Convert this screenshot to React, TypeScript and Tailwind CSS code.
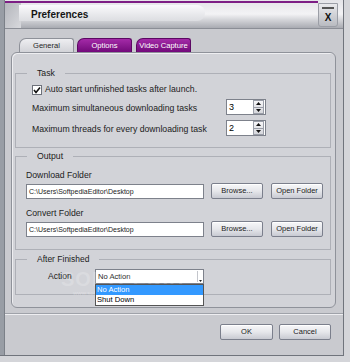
import React from "react";

const font = { fontFamily: '"Liberation Sans", Arial, sans-serif' };

function Spin({ value }: { value: string }) {
  return (
    <div className="w-[40px] h-[16px] bg-white border border-[#7d818b] flex items-center">
      <span className="flex-1 pl-[2px] text-[9px] leading-none text-black">{value}</span>
      <div className="w-[11px] h-[14px] mr-[1px] flex flex-col border border-[#9a9ea8] bg-gradient-to-b from-[#f6f6f8] to-[#d6d7dc]">
        <div className="flex-1 flex items-center justify-center">
          <svg width="5" height="3" viewBox="0 0 5 3"><path d="M0 3 L2.5 0 L5 3 Z" fill="#111" /></svg>
        </div>
        <div className="h-px bg-[#9a9ea8]" />
        <div className="flex-1 flex items-center justify-center">
          <svg width="5" height="3" viewBox="0 0 5 3"><path d="M0 0 L5 0 L2.5 3 Z" fill="#111" /></svg>
        </div>
      </div>
    </div>
  );
}

function Btn({ label, w }: { label: string; w: string }) {
  return (
    <div
      className={`${w} h-[16px] flex items-center justify-center rounded-[2px] border border-[#7b7f8c] bg-gradient-to-b from-[#f7f7f9] via-[#e6e7eb] to-[#c8cad2] text-[7.5px] text-[#1a1a1a] shadow-[inset_0_1px_0_#ffffff]`}
    >
      {label}
    </div>
  );
}

export default function App() {
  return (
    <div className="w-[350px] h-[362px] bg-[#d4d5d9] overflow-hidden" style={font}>
      <div className="w-[344px] h-[356px] flex bg-[#c9cacf] border-r border-b border-[#70747c]">
        <div className="w-[5px] bg-[#989da5] border-r border-[#7b8088]" />
        <div className="flex-1 flex flex-col relative">
          {/* Title bar */}
          <div className="h-[29px] relative flex items-center bg-gradient-to-b from-[#e4e4e8] via-[#f3f3f5] to-[#a9abb2] border-b border-[#8b8e96]">
            <div className="absolute left-0 right-[25px] top-[1px] h-[2px] bg-[#7d1e85]" />
            <div className="absolute left-0 top-[3px] w-[16px] h-[25px] bg-gradient-to-br from-[#b4b6bc] to-[#d8d9dd]" />
            <div className="absolute left-[14px] top-[5px] w-[186px] h-[16px] rounded-r-[8px] bg-gradient-to-b from-[#fafafc] to-[#dcdde1]" />
            <span className="relative ml-[26px] text-[10px] font-bold text-[#151515]">Preferences</span>
            <div className="absolute right-[5px] top-[3px] w-[20px] h-[24px] bg-gradient-to-b from-[#e9e9ec] to-[#b9bbc1] border border-[#9b9ea6] rounded-b-[3px] flex flex-col items-center">
              <div className="mt-[3px] w-[12px] h-[2px] bg-[#555]" />
              <span className="mt-[4px] text-[10px] font-bold leading-none text-[#111]">X</span>
            </div>
          </div>

          {/* Tabs */}
          <div className="mt-[9px] h-[14px] flex items-end pl-[14px]">
            <div className="w-[55px] h-[14px] rounded-tl-[7px] rounded-tr-[3px] border border-b-0 border-[#8e9199] bg-gradient-to-b from-[#eeeef1] to-[#d2d3d8] flex items-center justify-center text-[7.6px] font-medium text-[#1e1e1e]">
              General
            </div>
            <div className="ml-[3px] w-[55px] h-[14px] rounded-tl-[7px] rounded-tr-[3px] border border-b-0 border-[#5c0863] bg-gradient-to-b from-[#a42aa8] to-[#72087a] flex items-center justify-center text-[7.6px] font-medium text-white">
              Options
            </div>
            <div className="ml-[4px] w-[55px] h-[14px] rounded-tl-[7px] rounded-tr-[3px] border border-b-0 border-[#5c0863] bg-gradient-to-b from-[#a42aa8] to-[#72087a] flex items-center justify-center text-[7.6px] font-medium text-white whitespace-nowrap">
              Video Capture
            </div>
          </div>

          {/* Panel */}
          <div className="ml-[6px] w-[325px] h-[256px] rounded-[6px] border border-[#8f929a] bg-[#d2d3d8] shadow-[inset_1px_1px_0_#eeeef1] pt-[15px] pl-[3px] pr-[4px] flex flex-col text-[8.7px] text-[#1c1c1c]">
            {/* Task */}
            <fieldset className="h-[80px] border border-[#aeb0b7] px-0">
              <legend className="ml-[11px] px-[10px] h-[10px] leading-[10px] text-[8.7px]">Task</legend>
              <div className="pl-[16px] flex flex-col">
                <div className="mt-[6px] h-[12px] flex items-center">
                  <div className="w-[10px] h-[10px] bg-white border border-[#6d717a] flex items-center justify-center">
                    <svg width="8" height="8" viewBox="0 0 8 8"><path d="M1 4 L3 6.5 L7 1.5" stroke="#111" strokeWidth="1.6" fill="none" /></svg>
                  </div>
                  <span className="ml-[3px]">Auto start unfinished tasks after launch.</span>
                </div>
                <div className="mt-[3px] h-[16px] flex items-center">
                  <span className="w-[194px] pt-[3px]">Maximum simultaneous downloading tasks</span>
                  <Spin value="3" />
                </div>
                <div className="mt-[5px] h-[16px] flex items-center">
                  <span className="w-[194px] pt-[3px]">Maximum threads for every downloading task</span>
                  <Spin value="2" />
                </div>
              </div>
            </fieldset>

            {/* Output */}
            <fieldset className="mt-[3px] h-[99px] border border-[#aeb0b7]">
              <legend className="ml-[11px] px-[10px] h-[10px] leading-[10px] text-[8.7px]">Output</legend>
              <div className="pl-[10px] flex flex-col">
                <div className="mt-[9px] h-[10px] leading-[10px]">Download Folder</div>
                <div className="mt-[3px] h-[16px] flex items-center">
                  <div className="w-[178px] h-[15px] bg-white border border-[#7d818b] flex items-center pl-[2px] text-[7px] leading-none">
                    C:\Users\SoftpediaEditor\Desktop
                  </div>
                  <div className="ml-[7px]"><Btn label="Browse..." w="w-[52px]" /></div>
                  <div className="ml-[8px]"><Btn label="Open Folder" w="w-[52px]" /></div>
                </div>
                <div className="mt-[9px] h-[10px] leading-[10px]">Convert Folder</div>
                <div className="mt-[3px] h-[16px] flex items-center">
                  <div className="w-[178px] h-[15px] bg-white border border-[#7d818b] flex items-center pl-[2px] text-[7px] leading-none">
                    C:\Users\SoftpediaEditor\Desktop
                  </div>
                  <div className="ml-[7px]"><Btn label="Browse..." w="w-[52px]" /></div>
                  <div className="ml-[8px]"><Btn label="Open Folder" w="w-[52px]" /></div>
                </div>
              </div>
            </fieldset>

            {/* After Finished */}
            <fieldset className="mt-[4px] h-[41px] border border-[#aeb0b7]">
              <legend className="ml-[11px] px-[10px] h-[10px] leading-[10px] text-[8.5px]">After Finished</legend>
              <div className="pl-[32px] mt-[5px] h-[15px] flex items-center">
                <span className="w-[47px] text-[8.5px]">Action</span>
                <div className="relative w-[109px] h-[15px] bg-white border border-[#7d818b] flex items-center">
                  <span className="flex-1 pl-[2px] text-[7.6px] leading-none">No Action</span>
                  <div className="w-[5px] h-[11px] mr-[1px] flex items-end justify-center border-l border-[#c4c6cc]">
                    <svg width="3" height="2" viewBox="0 0 3 2"><path d="M0 0 L3 0 L1.5 2 Z" fill="#222" /></svg>
                  </div>
                  <div className="absolute left-[-1px] top-[14px] w-[109px] h-[22px] bg-white border border-[#555] flex flex-col text-[7.6px] leading-none z-10">
                    <div className="h-[10px] bg-[#3399ff] text-white flex items-center pl-[1px]">No Action</div>
                    <div className="h-[10px] flex items-center pl-[1px] text-black">Shut Down</div>
                  </div>
                </div>
              </div>
            </fieldset>
          </div>

          {/* Watermark */}
          <div className="absolute left-[56px] top-[264px] text-[20px] font-bold tracking-[1px] text-white/20 pointer-events-none">SOFTPEDIA</div>
          <div className="absolute left-[68px] top-[289px] text-[6px] text-white/30 pointer-events-none">www.softpedia.com</div>

          {/* separator */}
          <div className="mt-[5px] h-[2px] border-t border-[#9fa2a9] bg-[#eeeef1]" />

          {/* bottom buttons */}
          <div className="mt-[9px] flex justify-end pr-[12px]">
            <Btn label="OK" w="w-[53px]" />
            <div className="ml-[6px]"><Btn label="Cancel" w="w-[52px]" /></div>
          </div>
        </div>
      </div>
    </div>
  );
}
